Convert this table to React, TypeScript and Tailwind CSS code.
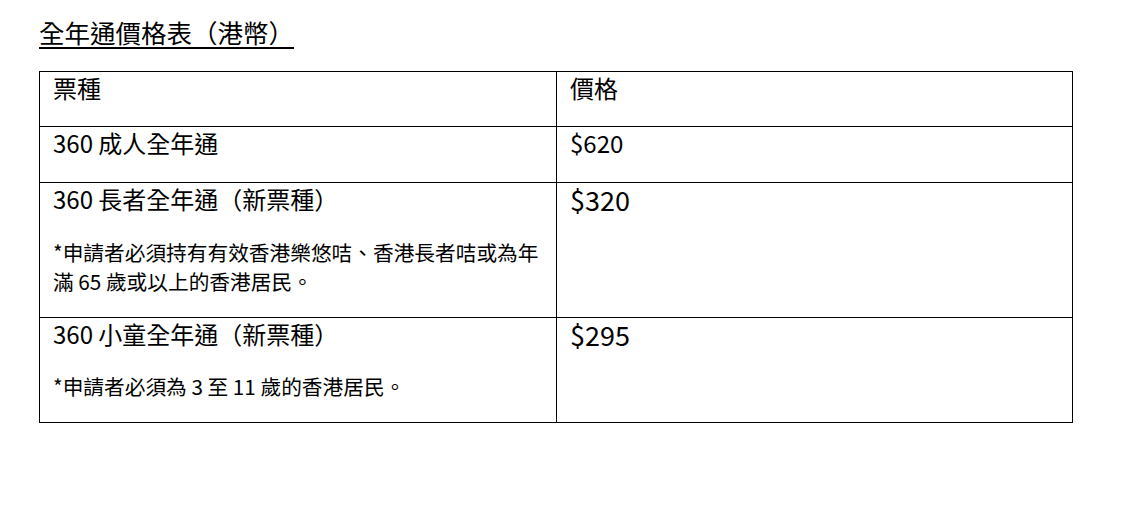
import React from "react";

const font = { fontFamily: '"Noto Sans CJK TC", "Noto Sans", sans-serif' };

export default function App() {
  return (
    <div className="w-[1138px] h-[511px] bg-white text-black" style={font}>
      <div className="pl-[39px] pt-[16px]">
        <h1 className="text-[25.5px] leading-[32px] underline underline-offset-[4px] decoration-[1.5px] font-normal">
          全年通價格表（港幣）
        </h1>
        <table className="mt-[23px] w-[1033px] border-collapse border border-black table-fixed">
          <colgroup>
            <col className="w-[517px]" />
            <col className="w-[516px]" />
          </colgroup>
          <tbody>
            <tr className="h-[55px]">
              <td className="border border-black align-top px-[13px] pt-0 text-[24px] leading-[32px]">票種</td>
              <td className="border border-black align-top px-[13px] pt-0 text-[24px] leading-[32px]">價格</td>
            </tr>
            <tr className="h-[56px]">
              <td className="border border-black align-top px-[13px] pt-0 text-[24px] leading-[32px]">360 成人全年通</td>
              <td className="border border-black align-top px-[13px] pt-0 text-[24px] leading-[32px]">$620</td>
            </tr>
            <tr className="h-[135px]">
              <td className="border border-black align-top px-[13px] pt-0">
                <div className="text-[24px] leading-[32px]">360 長者全年通（新票種）</div>
                <div className="mt-[23px] text-[20.7px] leading-[29px]">
                  *申請者必須持有有效香港樂悠咭、香港長者咭或為年滿 65 歲或以上的香港居民。
                </div>
              </td>
              <td className="border border-black align-top px-[13px] pt-0 text-[27px] leading-[34px]">$320</td>
            </tr>
            <tr className="h-[105px]">
              <td className="border border-black align-top px-[13px] pt-0">
                <div className="text-[24px] leading-[32px]">360 小童全年通（新票種）</div>
                <div className="mt-[22px] text-[20.7px] leading-[29px]">*申請者必須為 3 至 11 歲的香港居民。</div>
              </td>
              <td className="border border-black align-top px-[13px] pt-0 text-[27px] leading-[34px]">$295</td>
            </tr>
          </tbody>
        </table>
      </div>
    </div>
  );
}
